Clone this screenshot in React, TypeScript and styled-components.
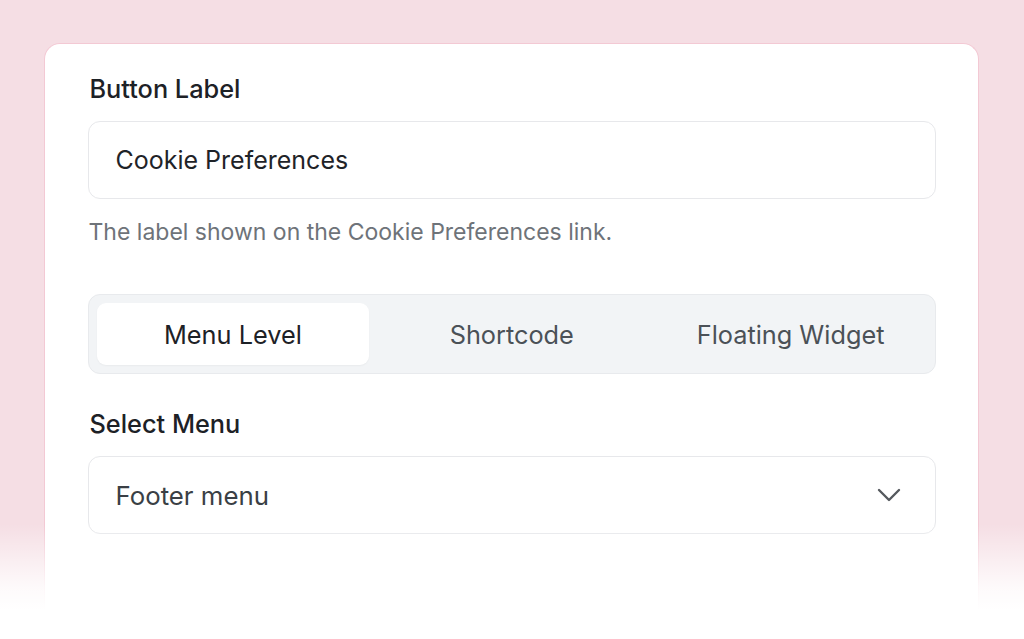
import styled, { createGlobalStyle } from 'styled-components';

const GlobalStyle = createGlobalStyle`
	html, body {
		margin: 0;
		padding: 0;
		background: #f5dee4;
	}
	body {
		font-family: Inter, "Noto Sans", "Liberation Sans", sans-serif;
		-webkit-font-smoothing: antialiased;
	}
`;

const Page = styled.div`
	position: relative;
	height: 639px;
	box-sizing: border-box;
	padding: 43px 45px 0 44px;
	overflow: hidden;
`;

const Card = styled.div`
	box-sizing: border-box;
	height: 640px;
	background: #ffffff;
	border: 1.5px solid #f3c9d4;
	border-bottom: none;
	border-radius: 16px 16px 0 0;
	padding: 31px 42px 0 42.5px;
	display: flex;
	flex-direction: column;
`;

const Label = styled.div<{ $gap?: number }>`
	font-size: 25.3px;
	line-height: 28px;
	font-weight: 500;
	color: #1d2126;
	padding-left: 2px;
	margin-top: ${(p) => p.$gap ?? 0}px;
	margin-bottom: 18px;
`;

const Field = styled.div`
	box-sizing: border-box;
	height: 78px;
	border: 1.5px solid #e7e8eb;
	border-radius: 12px;
	padding: 0 34px 0 27px;
	display: flex;
	align-items: center;
	justify-content: space-between;
	font-size: 25px;
	color: #1f2328;
`;

const SelectText = styled.span`
	color: #3a3f45;
	font-size: 25.8px;
`;

const Chevron = styled.svg`
	width: 24px;
	height: 14px;
	fill: none;
	stroke: #55595e;
	stroke-width: 2.4;
	stroke-linecap: round;
	stroke-linejoin: round;
`;

const Hint = styled.div`
	margin-top: 19px;
	padding-left: 1px;
	font-size: 23px;
	line-height: 28px;
	color: #6e7379;
`;

const Tabs = styled.div`
	margin-top: 48px;
	box-sizing: border-box;
	height: 80px;
	background: #f2f4f6;
	border: 1.5px solid #e8eaed;
	border-radius: 12px;
	padding: 8px;
	display: grid;
	grid-template-columns: repeat(3, 1fr);
	gap: 6px;
`;

const Tab = styled.div<{ $active?: boolean }>`
	display: flex;
	align-items: center;
	justify-content: center;
	border-radius: 9px;
	font-size: 25.3px;
	color: ${(p) => (p.$active ? '#1d2126' : '#4b5157')};
	background: ${(p) => (p.$active ? '#ffffff' : 'transparent')};
	box-shadow: ${(p) => (p.$active ? '0 1px 2px rgba(0,0,0,0.04)' : 'none')};
`;

const Fade = styled.div`
	position: absolute;
	left: 0;
	right: 0;
	bottom: 0;
	height: 115px;
	background: linear-gradient(
		to bottom,
		rgba(255, 255, 255, 0) 0%,
		rgba(255, 255, 255, 0.85) 55%,
		#ffffff 75%
	);
	pointer-events: none;
`;

export default function App() {
	return (
		<>
			<GlobalStyle />
			<Page>
				<Card>
					<Label>Button Label</Label>
					<Field>Cookie Preferences</Field>
					<Hint>The label shown on the Cookie Preferences link.</Hint>
					<Tabs>
						<Tab $active>Menu Level</Tab>
						<Tab>Shortcode</Tab>
						<Tab>Floating Widget</Tab>
					</Tabs>
					<Label $gap={36}>Select Menu</Label>
					<Field>
						<SelectText>Footer menu</SelectText>
						<Chevron viewBox="0 0 24 14">
							<polyline points="2,2 12,12 22,2" />
						</Chevron>
					</Field>
				</Card>
				<Fade />
			</Page>
		</>
	);
}
